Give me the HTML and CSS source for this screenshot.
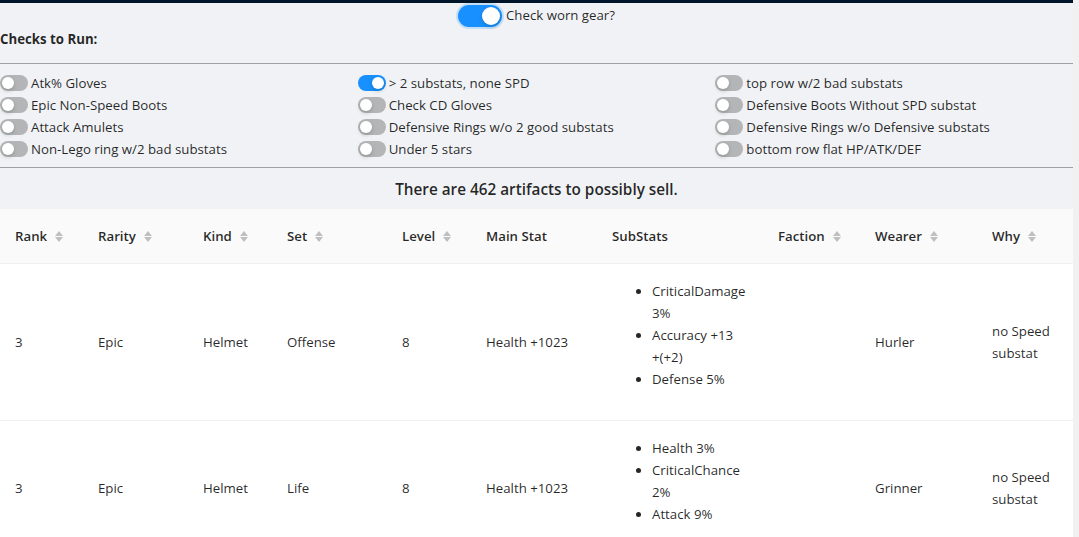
FILE: index.html
```html
<!DOCTYPE html>
<html lang="en">
<head>
<meta charset="utf-8">
<title>Artifacts to sell</title>
<link rel="stylesheet" href="styles.css">
</head>
<body>
<div class="page">
  <div class="topbar"></div>
  <div class="worn">
    <span class="switch switch-lg on"><span class="knob"></span></span>
    <span class="worn-label">Check worn gear?</span>
  </div>
  <div class="title">Checks to Run:</div>
  <hr class="rule rule-a">
  <div class="checks">
    <label class="check"><span class="switch"><span class="knob"></span></span><span>Atk% Gloves</span></label>
    <label class="check"><span class="switch"><span class="knob"></span></span><span>Epic Non-Speed Boots</span></label>
    <label class="check"><span class="switch"><span class="knob"></span></span><span>Attack Amulets</span></label>
    <label class="check"><span class="switch"><span class="knob"></span></span><span>Non-Lego ring w/2 bad substats</span></label>
    <label class="check"><span class="switch on"><span class="knob"></span></span><span>&gt; 2 substats, none SPD</span></label>
    <label class="check"><span class="switch"><span class="knob"></span></span><span>Check CD Gloves</span></label>
    <label class="check"><span class="switch"><span class="knob"></span></span><span>Defensive Rings w/o 2 good substats</span></label>
    <label class="check"><span class="switch"><span class="knob"></span></span><span>Under 5 stars</span></label>
    <label class="check"><span class="switch"><span class="knob"></span></span><span>top row w/2 bad substats</span></label>
    <label class="check"><span class="switch"><span class="knob"></span></span><span>Defensive Boots Without SPD substat</span></label>
    <label class="check"><span class="switch"><span class="knob"></span></span><span>Defensive Rings w/o Defensive substats</span></label>
    <label class="check"><span class="switch"><span class="knob"></span></span><span>bottom row flat HP/ATK/DEF</span></label>
  </div>
  <hr class="rule rule-b">
  <div class="msg">There are 462 artifacts to possibly sell.</div>
  <table class="grid">
    <colgroup>
      <col class="c-rank"><col class="c-rarity"><col class="c-kind"><col class="c-set"><col class="c-level">
      <col class="c-main"><col class="c-subs"><col class="c-faction"><col class="c-wearer"><col class="c-why">
    </colgroup>
    <thead>
      <tr>
        <th><span class="th">Rank<span class="sorter"><i class="up"></i><i class="down"></i></span></span></th>
        <th><span class="th">Rarity<span class="sorter"><i class="up"></i><i class="down"></i></span></span></th>
        <th><span class="th">Kind<span class="sorter"><i class="up"></i><i class="down"></i></span></span></th>
        <th><span class="th">Set<span class="sorter"><i class="up"></i><i class="down"></i></span></span></th>
        <th><span class="th">Level<span class="sorter"><i class="up"></i><i class="down"></i></span></span></th>
        <th><span class="th">Main Stat</span></th>
        <th><span class="th">SubStats</span></th>
        <th><span class="th">Faction<span class="sorter"><i class="up"></i><i class="down"></i></span></span></th>
        <th><span class="th">Wearer<span class="sorter"><i class="up"></i><i class="down"></i></span></span></th>
        <th><span class="th">Why<span class="sorter"><i class="up"></i><i class="down"></i></span></span></th>
      </tr>
    </thead>
    <tbody>
      <tr>
        <td>3</td><td>Epic</td><td>Helmet</td><td>Offense</td><td>8</td><td>Health +1023</td>
        <td><ul class="subs"><li>CriticalDamage 3%</li><li>Accuracy +13 <span class="nw">+(+2)</span></li><li>Defense 5%</li></ul></td>
        <td></td><td>Hurler</td><td>no Speed substat</td>
      </tr>
      <tr>
        <td>3</td><td>Epic</td><td>Helmet</td><td>Life</td><td>8</td><td>Health +1023</td>
        <td><ul class="subs"><li>Health 3%</li><li>CriticalChance 2%</li><li>Attack 9%</li></ul></td>
        <td></td><td>Grinner</td><td>no Speed substat</td>
      </tr>
    </tbody>
  </table>
</div>
</body>
</html>
```
FILE: styles.css
```css
html {
  background: #f1f1f1;
}
body {
  margin: 0;
  font-family: "Open Sans", "Noto Sans", "Liberation Sans", sans-serif;
  font-size: 13.25px;
  line-height: 22px;
  color: rgba(0, 0, 0, 0.85);
}
.page {
  width: 1073px;
  background: #f0f2f5;
  min-height: 537px;
}
.topbar {
  height: 3px;
  background: #001529;
}
.worn {
  display: flex;
  justify-content: center;
  align-items: flex-start;
  gap: 4px;
  height: 25px;
  padding-top: 2px;
  box-sizing: border-box;
}
.worn-label {
  line-height: 20px;
}
.switch {
  position: relative;
  display: inline-block;
  flex: none;
  width: 28px;
  height: 16px;
  border-radius: 8px;
  background: rgba(0, 0, 0, 0.25);
}
.switch .knob {
  position: absolute;
  top: 2px;
  left: 2px;
  width: 12px;
  height: 12px;
  border-radius: 50%;
  background: #fff;
  box-shadow: 0 2px 4px rgba(0, 35, 11, 0.2);
}
.switch.on {
  background: #1890ff;
}
.switch.on .knob {
  left: 14px;
}
.switch-lg {
  width: 44px;
  height: 22px;
  border-radius: 11px;
  box-shadow: 0 0 0 2px rgba(24, 144, 255, 0.2);
}
.switch-lg .knob {
  width: 18px;
  height: 18px;
}
.switch-lg.on .knob {
  left: 24px;
}
.title {
  font-weight: 700;
  line-height: 22px;
}
.rule {
  border: 0;
  border-top: 1px solid #a0a0a0;
  margin: 0;
}
.rule-a {
  margin-top: 13px;
}
.checks {
  display: grid;
  grid-template-columns: repeat(3, 1fr);
  grid-template-rows: repeat(4, 22px);
  grid-auto-flow: column;
  margin-top: 8px;
}
.check {
  display: flex;
  align-items: center;
  gap: 3px;
  white-space: nowrap;
}
.rule-b {
  margin-top: 7px;
}
.msg {
  text-align: center;
  font-size: 15.3px;
  font-weight: 600;
  line-height: 24px;
  margin-top: 9px;
  margin-bottom: 8px;
}
.grid {
  width: 1073px;
  table-layout: fixed;
  border-collapse: collapse;
  background: #fff;
}
.c-rank { width: 82px; }
.c-rarity { width: 105px; }
.c-kind { width: 84px; }
.c-set { width: 115px; }
.c-level { width: 84px; }
.c-main { width: 126px; }
.c-subs { width: 166px; }
.c-faction { width: 97px; }
.c-wearer { width: 117px; }
.c-why { width: 97px; }
.grid th {
  background: #fafafa;
  text-align: left;
  font-weight: 600;
  padding: 16px 12px 16px 16px;
  border-bottom: 1px solid #f0f0f0;
  line-height: 22px;
}
.grid th:first-child,
.grid td:first-child {
  padding-left: 15px;
}
.th {
  display: inline-flex;
  align-items: center;
  gap: 8px;
}
.sorter {
  display: inline-flex;
  flex-direction: column;
  gap: 1px;
}
.sorter i {
  display: block;
  width: 0;
  height: 0;
  border-left: 4px solid transparent;
  border-right: 4px solid transparent;
}
.sorter .up {
  border-bottom: 5px solid #bfbfbf;
}
.sorter .down {
  border-top: 5px solid #bfbfbf;
}
.grid td {
  padding: 16px 12px 16px 16px;
  border-bottom: 1px solid #f0f0f0;
  vertical-align: middle;
  line-height: 22px;
}
.subs {
  margin: 0 0 14px;
  padding-left: 40px;
}
.nw {
  white-space: nowrap;
}
```
